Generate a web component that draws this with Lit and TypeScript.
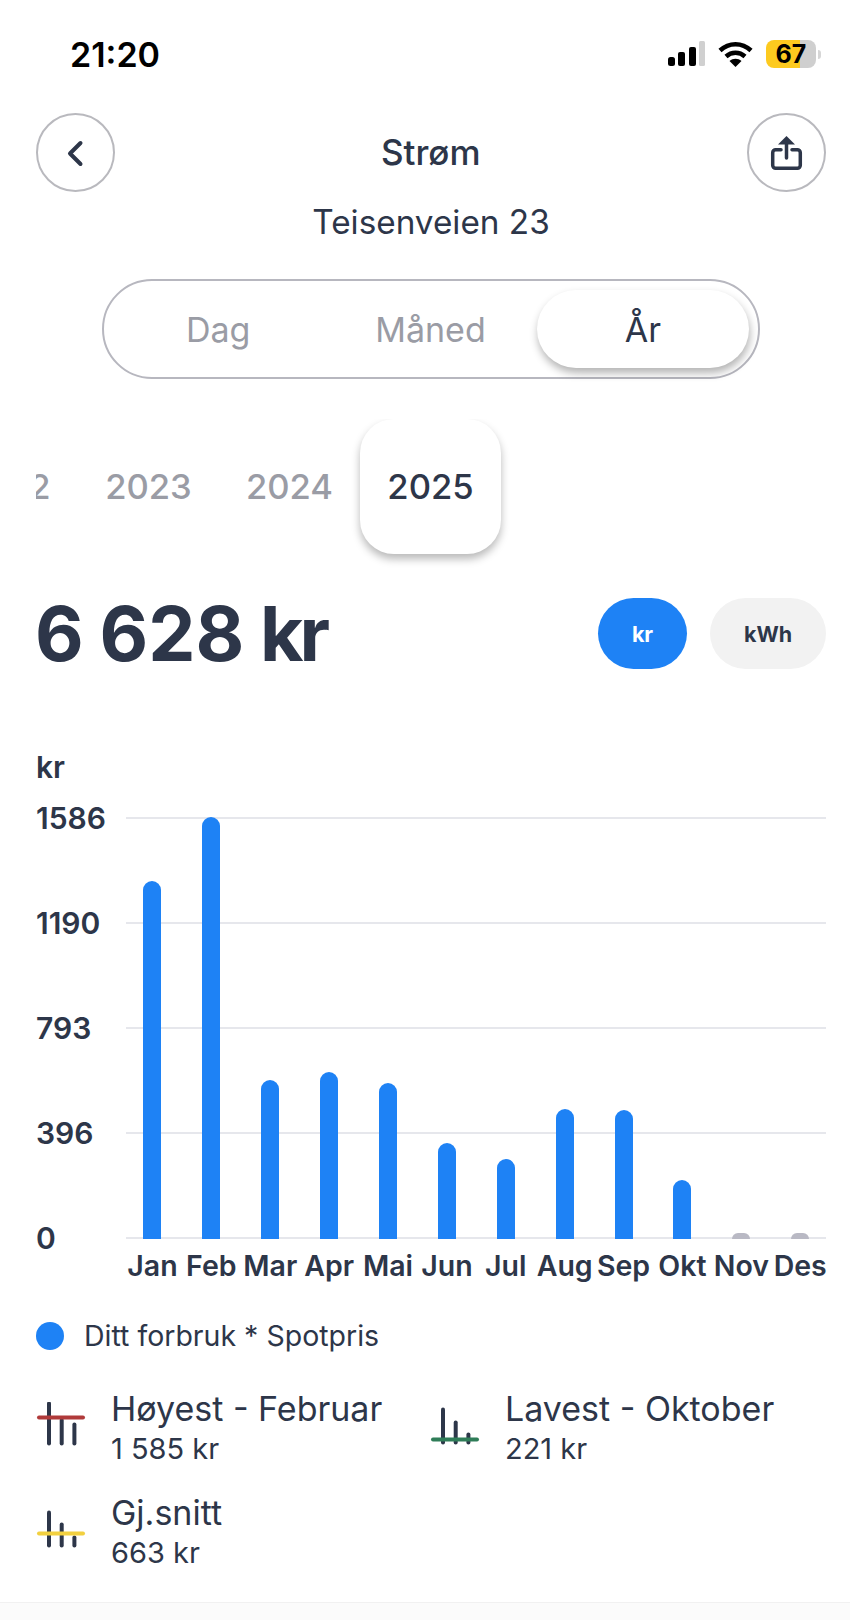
import { LitElement, html, css, svg } from 'lit';
import { customElement } from 'lit/decorators.js';

const MONTHS = [
  { name: 'Jan', kr: 1345 },
  { name: 'Feb', kr: 1585 },
  { name: 'Mar', kr: 599 },
  { name: 'Apr', kr: 627 },
  { name: 'Mai', kr: 585 },
  { name: 'Jun', kr: 362 },
  { name: 'Jul', kr: 302 },
  { name: 'Aug', kr: 489 },
  { name: 'Sep', kr: 485 },
  { name: 'Okt', kr: 221 },
  { name: 'Nov', kr: 0 },
  { name: 'Des', kr: 0 },
];

const AXIS = ['1586', '1190', '793', '396', '0'];
const MAX_KR = 1586;
const PLOT_HEIGHT = 422;

// Three little bars with a coloured line through them
const statIcon = (color: string, lineY: number, tops: number[], bottom: number) => html`
  <svg class="stat-icon" width="50" height="50" viewBox="0 0 50 50" fill="none" stroke-linecap="round">
    ${tops.map((top, i) => svg`<line x1=${13 + i * 12.7} x2=${13 + i * 12.7} y1=${top} y2=${bottom} stroke="#2d3649" stroke-width="4"></line>`)}
    <line x1="3" x2="47" y1=${lineY} y2=${lineY} stroke=${color} stroke-width="4"></line>
  </svg>
`;

@customElement('app-root')
export class AppRoot extends LitElement {
  static styles = css`
    :host {
      display: block;
      position: relative;
      width: 850px;
      height: 1620px;
      overflow: hidden;
      background: #fff;
      color: #2d3649;
      font-family: Inter, "Liberation Sans", sans-serif;
    }

    /* ---- Status bar ---- */
    .status {
      height: 113px;
      box-sizing: border-box;
      padding: 36px 29px 0 70px;
      display: flex;
      justify-content: space-between;
      align-items: flex-start;
      color: #000;
    }
    .time {
      font-size: 34px;
      line-height: 38px;
      font-weight: 600;
    }
    .status-icons {
      display: flex;
      align-items: center;
      margin-top: 4px;
    }
    .battery {
      width: 50px;
      height: 28px;
      margin-left: 13px;
      border-radius: 8px;
      background: linear-gradient(90deg, #fdca1f 0 68%, #cfcfcf 68% 100%);
      font-size: 25px;
      line-height: 28px;
      font-weight: 700;
      text-align: center;
    }
    .nub {
      width: 3px;
      height: 9px;
      margin-left: 2px;
      border-radius: 0 3px 3px 0;
      background: #d6d6d6;
    }

    /* ---- Header ---- */
    .page {
      padding: 0 24px 0 36px;
    }
    .header {
      display: grid;
      grid-template-columns: 79px 1fr 79px;
      align-items: center;
      margin-left: -0.5px;
    }
    .round {
      width: 79px;
      height: 79px;
      box-sizing: border-box;
      border: 2.5px solid #b9b9be;
      border-radius: 50%;
      display: flex;
      align-items: center;
      justify-content: center;
    }
    .title {
      padding-bottom: 2px;
      text-align: center;
      font-size: 35px;
      font-weight: 500;
    }
    .subtitle {
      margin-top: 9px;
      text-align: center;
      font-size: 33.3px;
      line-height: 42px;
    }

    /* ---- Dag / Måned / År ---- */
    .segment {
      box-sizing: border-box;
      width: 658px;
      height: 100px;
      margin: 36px auto 0;
      padding: 9px 9px 9px 8px;
      border: 2.5px solid #b7b7bf;
      border-radius: 50px;
      display: grid;
      grid-template-columns: repeat(3, 1fr);
    }
    .segment div {
      display: flex;
      align-items: center;
      justify-content: center;
      height: 78px;
      border-radius: 39px;
      font-size: 34px;
      color: #9a9ca5;
    }
    .segment .on {
      background: #fff;
      color: #2d3649;
      box-shadow: 1px 5px 8px rgba(0, 0, 0, 0.3);
    }

    /* ---- Years ---- */
    .years {
      display: flex;
      height: 135px;
      margin-top: 40px;
      padding-bottom: 14px;
      overflow: hidden;
    }
    .years div {
      flex: 0 0 141px;
      box-sizing: border-box;
      padding-bottom: 2px;
      display: flex;
      align-items: center;
      justify-content: center;
      font-size: 34.6px;
      font-weight: 500;
      color: #9a9ca5;
    }
    .years div:first-child {
      margin-left: -99px;
    }
    .years .on {
      background: #fff;
      color: #2d3649;
      border-radius: 34px;
      box-shadow: 0 5px 9px rgba(0, 0, 0, 0.28);
    }

    /* ---- Total ---- */
    .total-row {
      display: flex;
      align-items: center;
      justify-content: space-between;
      margin-top: 30px;
    }
    .total {
      margin-left: -1px;
      font-size: 75px;
      line-height: 71px;
      font-weight: 700;
      word-spacing: -2px;
    }
    .total span {
      letter-spacing: -4px;
    }
    .units {
      display: flex;
      gap: 23px;
    }
    .unit {
      height: 71px;
      border-radius: 36px;
      display: flex;
      align-items: center;
      justify-content: center;
      font-size: 21.5px;
      font-weight: 700;
    }
    .unit.kr {
      width: 89px;
      background: #1e82f5;
      color: #fff;
    }
    .unit.kwh {
      width: 116px;
      background: #f2f2f2;
    }

    /* ---- Chart ---- */
    .chart-unit {
      margin-top: 81px;
      font-size: 30px;
      line-height: 34px;
      font-weight: 600;
    }
    .plot {
      position: relative;
      margin-top: 19px;
    }
    .rows {
      display: flex;
      flex-direction: column;
      gap: 75px;
    }
    .row {
      display: flex;
      align-items: center;
      height: 30px;
      font-size: 30px;
      font-weight: 600;
    }
    .row span {
      width: 90px;
    }
    .row i {
      flex: 1;
      height: 2px;
      background: #e6e7ec;
    }
    .bars {
      position: absolute;
      left: 87px;
      bottom: 14px;
      display: grid;
      grid-template-columns: repeat(12, 58.9px);
      align-items: end;
      justify-items: center;
    }
    .bar {
      width: 18px;
      border-radius: 9px 9px 0 0;
      background: #1e82f5;
    }
    .bar.empty {
      height: 6px;
      background: #b9b9c4;
    }
    .months {
      display: grid;
      grid-template-columns: repeat(12, 58.9px);
      justify-items: center;
      margin: -4px 0 0 87px;
      font-size: 28.5px;
      line-height: 34px;
      font-weight: 600;
      white-space: nowrap;
    }

    /* ---- Legend + stats ---- */
    .legend {
      display: flex;
      align-items: center;
      gap: 20px;
      margin-top: 36px;
      font-size: 28.5px;
      line-height: 34px;
    }
    .dot {
      width: 28px;
      height: 28px;
      border-radius: 50%;
      background: #1e82f5;
    }
    .stats {
      display: grid;
      grid-template-columns: 394px 1fr;
      row-gap: 26px;
      margin-top: 35px;
    }
    .stat {
      display: flex;
      gap: 25px;
      align-items: center;
    }
    .stat-name {
      font-size: 34px;
      line-height: 42px;
    }
    .stat-value {
      margin-top: 2px;
      font-size: 29px;
      line-height: 34px;
    }
    .footer {
      position: absolute;
      left: 0;
      right: 0;
      bottom: 0;
      height: 17px;
      background: #fbfbfb;
      border-top: 1px solid #f1f1f1;
    }
  `;

  render() {
    return html`
      <div class="status">
        <div class="time">21:20</div>
        <div class="status-icons">
          <svg width="37" height="26" viewBox="0 0 37 26">
            <rect x="0" y="16" width="7" height="9" rx="2.5" fill="#000"></rect>
            <rect x="10" y="11" width="7" height="14" rx="2" fill="#000"></rect>
            <rect x="21" y="6" width="7" height="19" rx="2" fill="#000"></rect>
            <rect x="31" y="0" width="6" height="25" rx="1.5" fill="#d0d0d0"></rect>
          </svg>
          <svg style="margin-left:13px" width="35" height="26" viewBox="0 0 35 26" fill="none" stroke="#000" stroke-width="4.5">
            <path d="M2 9.5C11 1 24 1 33 9.5"></path>
            <path d="M8 15.5C13.5 10.5 21.5 10.5 27 15.5"></path>
            <path d="M17.5 26L11.5 20C15 17 20 17 23.5 20Z" fill="#000" stroke="none"></path>
          </svg>
          <div class="battery">67</div>
          <div class="nub"></div>
        </div>
      </div>

      <div class="page">
        <div class="header">
          <div class="round">
            <svg width="22" height="30" viewBox="0 0 22 30" fill="none" stroke="#2d3649" stroke-width="4" stroke-linecap="round" stroke-linejoin="round">
              <path d="M16.5 5L6 15.5L16.5 26"></path>
            </svg>
          </div>
          <div class="title">Strøm</div>
          <div class="round">
            <svg width="36" height="40" viewBox="0 0 36 40" fill="none" stroke="#2d3649" stroke-width="3.5" stroke-linecap="round" stroke-linejoin="round">
              <path d="M12 16.7H6.7a3 3 0 0 0 -3 3V32.3a3 3 0 0 0 3 3H28.3a3 3 0 0 0 3-3V19.7a3 3 0 0 0-3-3H23"></path>
              <path d="M17.5 11V25"></path>
              <path d="M17.5 3L26 11.5H9Z" fill="#2d3649" stroke="none"></path>
            </svg>
          </div>
        </div>
        <div class="subtitle">Teisenveien 23</div>

        <div class="segment">
          <div>Dag</div>
          <div>Måned</div>
          <div class="on">År</div>
        </div>

        <div class="years">
          <div>2022</div>
          <div>2023</div>
          <div>2024</div>
          <div class="on">2025</div>
        </div>

        <div class="total-row">
          <div class="total">6 628 <span>kr</span></div>
          <div class="units">
            <div class="unit kr">kr</div>
            <div class="unit kwh">kWh</div>
          </div>
        </div>

        <div class="chart-unit">kr</div>
        <div class="plot">
          <div class="rows">
            ${AXIS.map((label) => html`<div class="row"><span>${label}</span><i></i></div>`)}
          </div>
          <div class="bars">
            ${MONTHS.map((m) => m.kr > 0
              ? html`<div class="bar" style="height:${(m.kr / MAX_KR) * PLOT_HEIGHT}px"></div>`
              : html`<div class="bar empty"></div>`)}
          </div>
        </div>
        <div class="months">
          ${MONTHS.map((m) => html`<div>${m.name}</div>`)}
        </div>

        <div class="legend">
          <div class="dot"></div>
          <div>Ditt forbruk * Spotpris</div>
        </div>

        <div class="stats">
          <div class="stat">
            ${statIcon('#b03a3a', 15.5, [1.5, 18, 22.5], 41.5)}
            <div>
              <div class="stat-name">Høyest - Februar</div>
              <div class="stat-value">1 585 kr</div>
            </div>
          </div>
          <div class="stat">
            ${statIcon('#2f7d58', 37.5, [7.5, 20.5, 32.5], 40.5)}
            <div>
              <div class="stat-name">Lavest - Oktober</div>
              <div class="stat-value">221 kr</div>
            </div>
          </div>
          <div class="stat">
            ${statIcon('#f2d03f', 27.5, [6.5, 18.5, 31.5], 39.5)}
            <div>
              <div class="stat-name">Gj.snitt</div>
              <div class="stat-value">663 kr</div>
            </div>
          </div>
        </div>
      </div>
      <div class="footer"></div>
    `;
  }
}
